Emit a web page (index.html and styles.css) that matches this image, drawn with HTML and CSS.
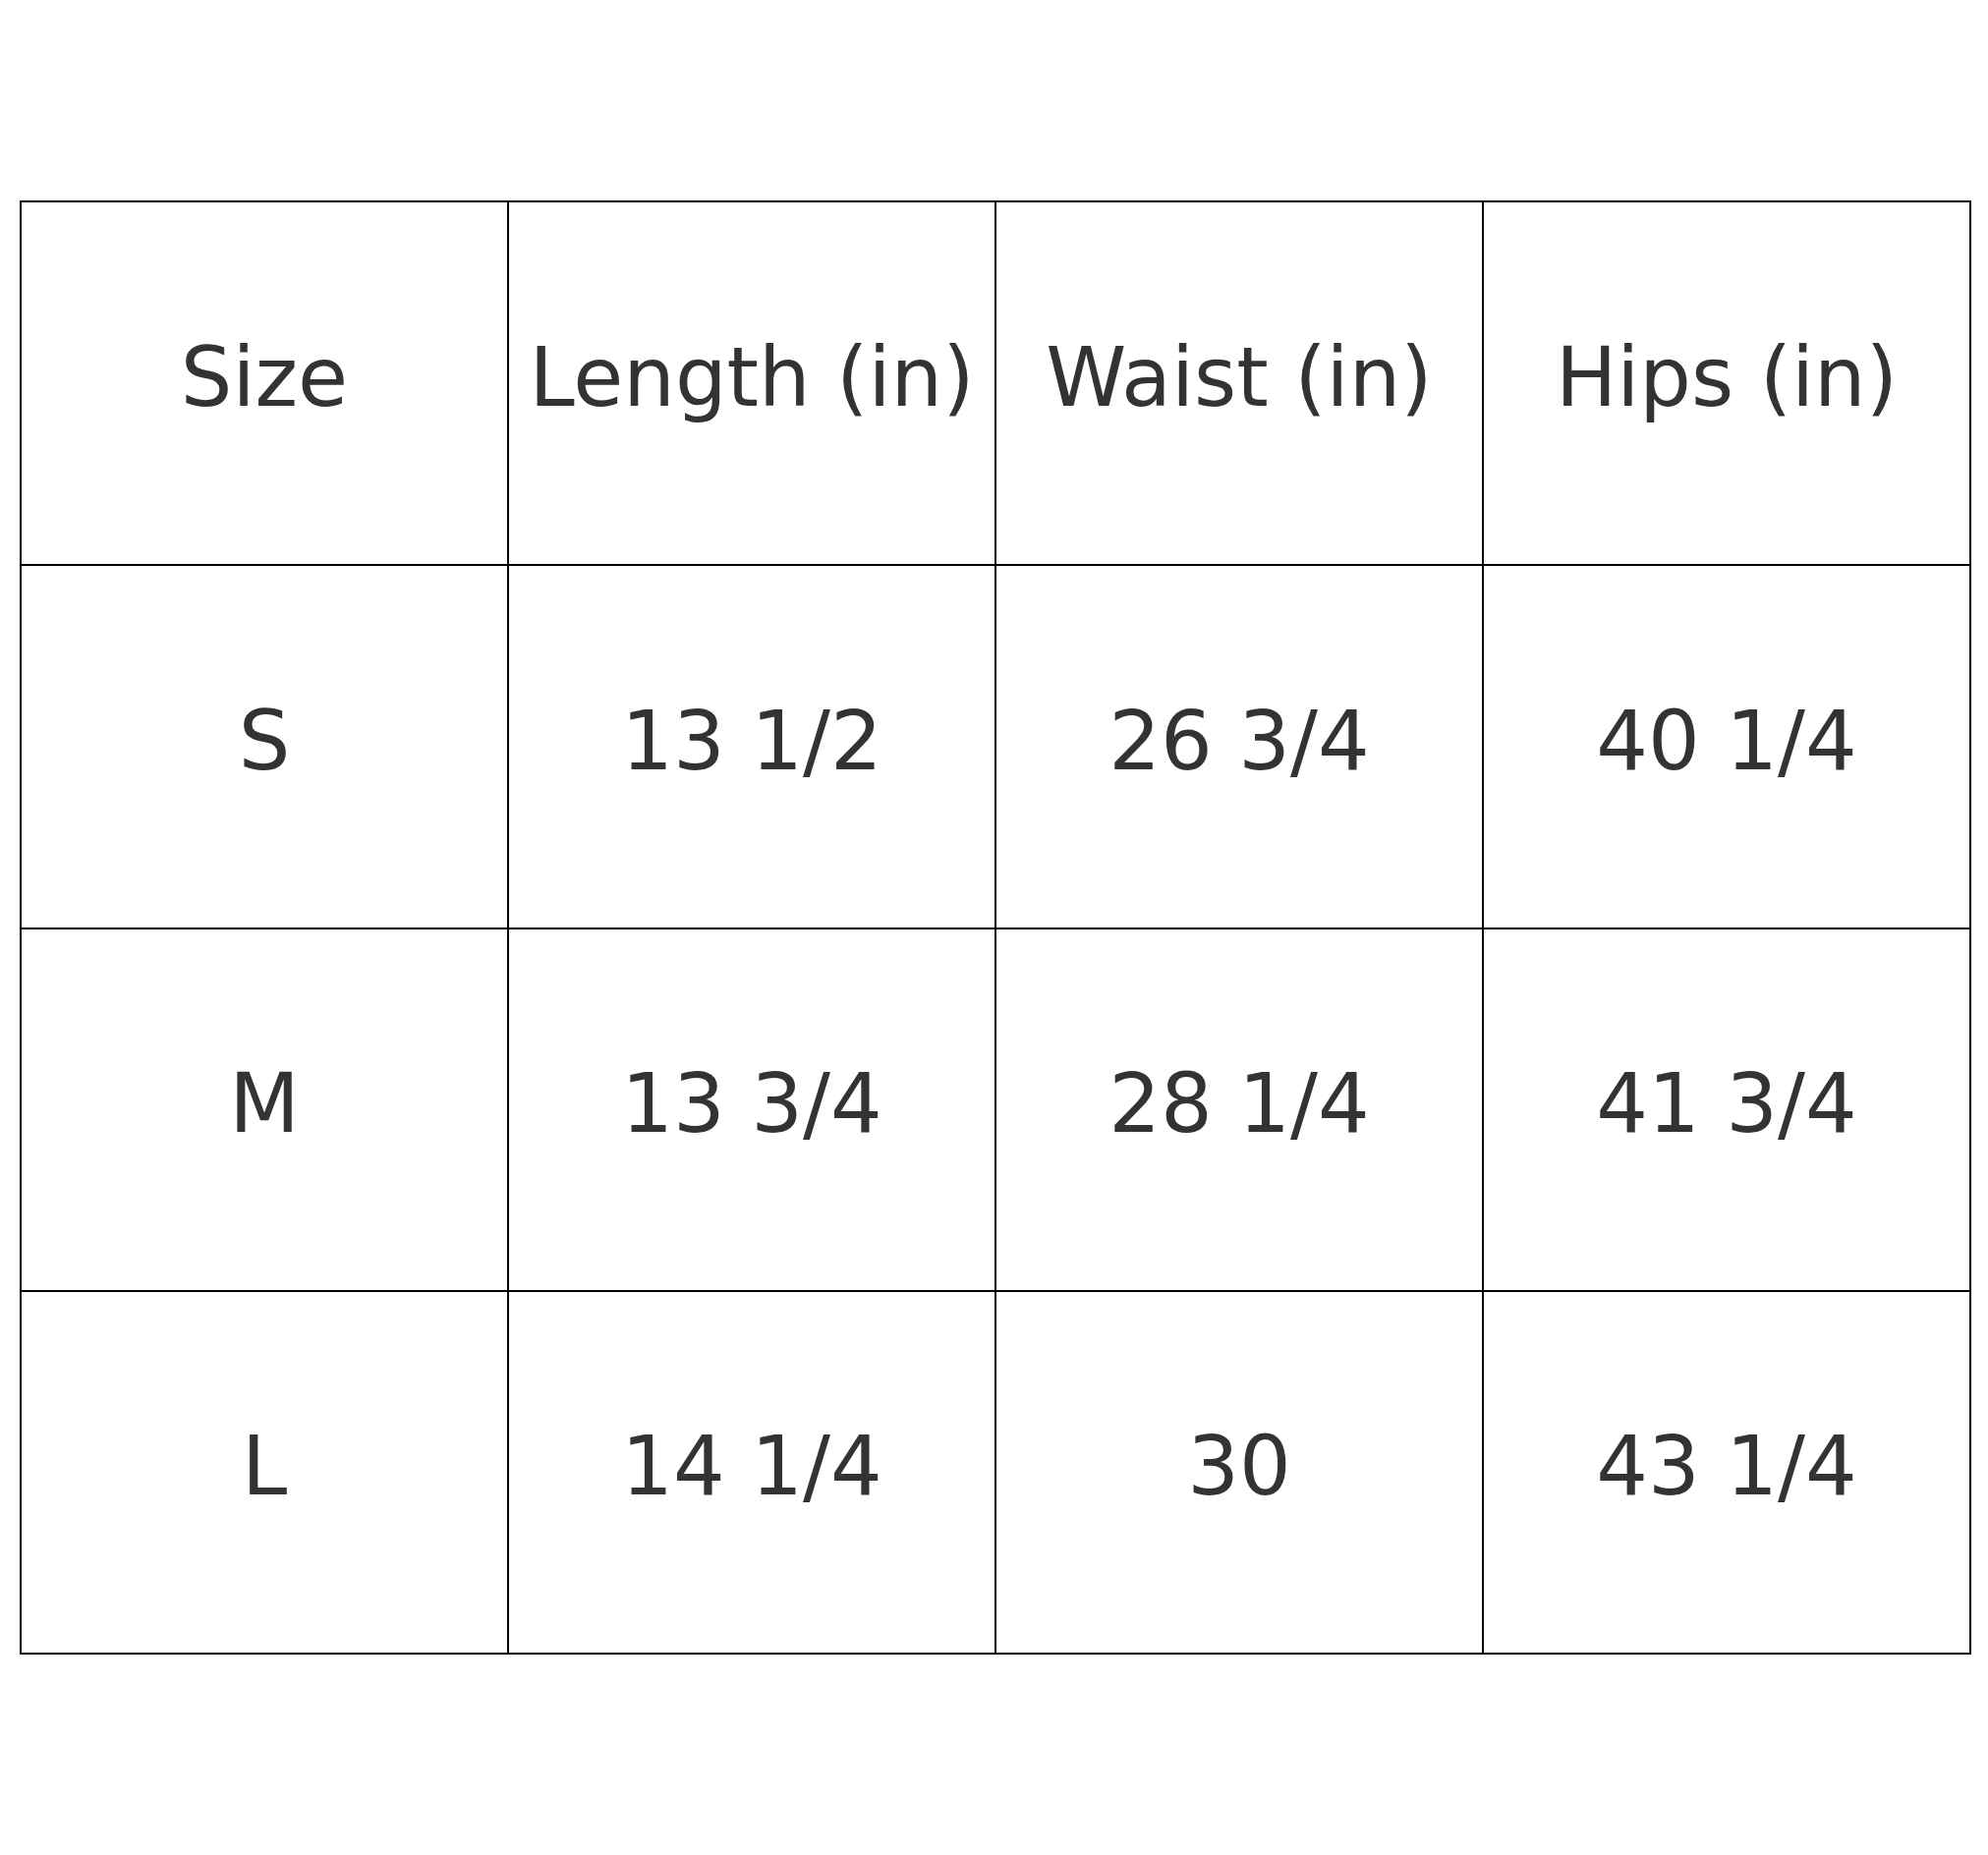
FILE: index.html
```html
<!DOCTYPE html>
<html lang="en">
<head>
<meta charset="utf-8">
<title>Size chart</title>
<link rel="stylesheet" href="styles.css">
</head>
<body>
<div class="chart">
  <div class="cell">Size</div>
  <div class="cell">Length (in)</div>
  <div class="cell">Waist (in)</div>
  <div class="cell">Hips (in)</div>
  <div class="cell">S</div>
  <div class="cell">13 1/2</div>
  <div class="cell">26 3/4</div>
  <div class="cell">40 1/4</div>
  <div class="cell">M</div>
  <div class="cell">13 3/4</div>
  <div class="cell">28 1/4</div>
  <div class="cell">41 3/4</div>
  <div class="cell">L</div>
  <div class="cell">14 1/4</div>
  <div class="cell">30</div>
  <div class="cell">43 1/4</div>
</div>
</body>
</html>
```
FILE: styles.css
```css
html, body {
  margin: 0;
  padding: 0;
  background: #ffffff;
}
body {
  font-family: "DejaVu Sans", "Liberation Sans", sans-serif;
  color: #333333;
}
.chart {
  display: grid;
  grid-template-columns: repeat(4, 496px);
  grid-template-rows: 370px 370px 369px 369px;
  width: max-content;
  margin: 204px 0 0 20px;
  border-top: 2px solid #000000;
  border-left: 2px solid #000000;
}
.cell {
  box-sizing: border-box;
  display: flex;
  align-items: center;
  justify-content: center;
  border-right: 2px solid #000000;
  border-bottom: 2px solid #000000;
  padding-bottom: 10px;
  font-size: 83px;
  line-height: 1.164;
  white-space: nowrap;
}
```
